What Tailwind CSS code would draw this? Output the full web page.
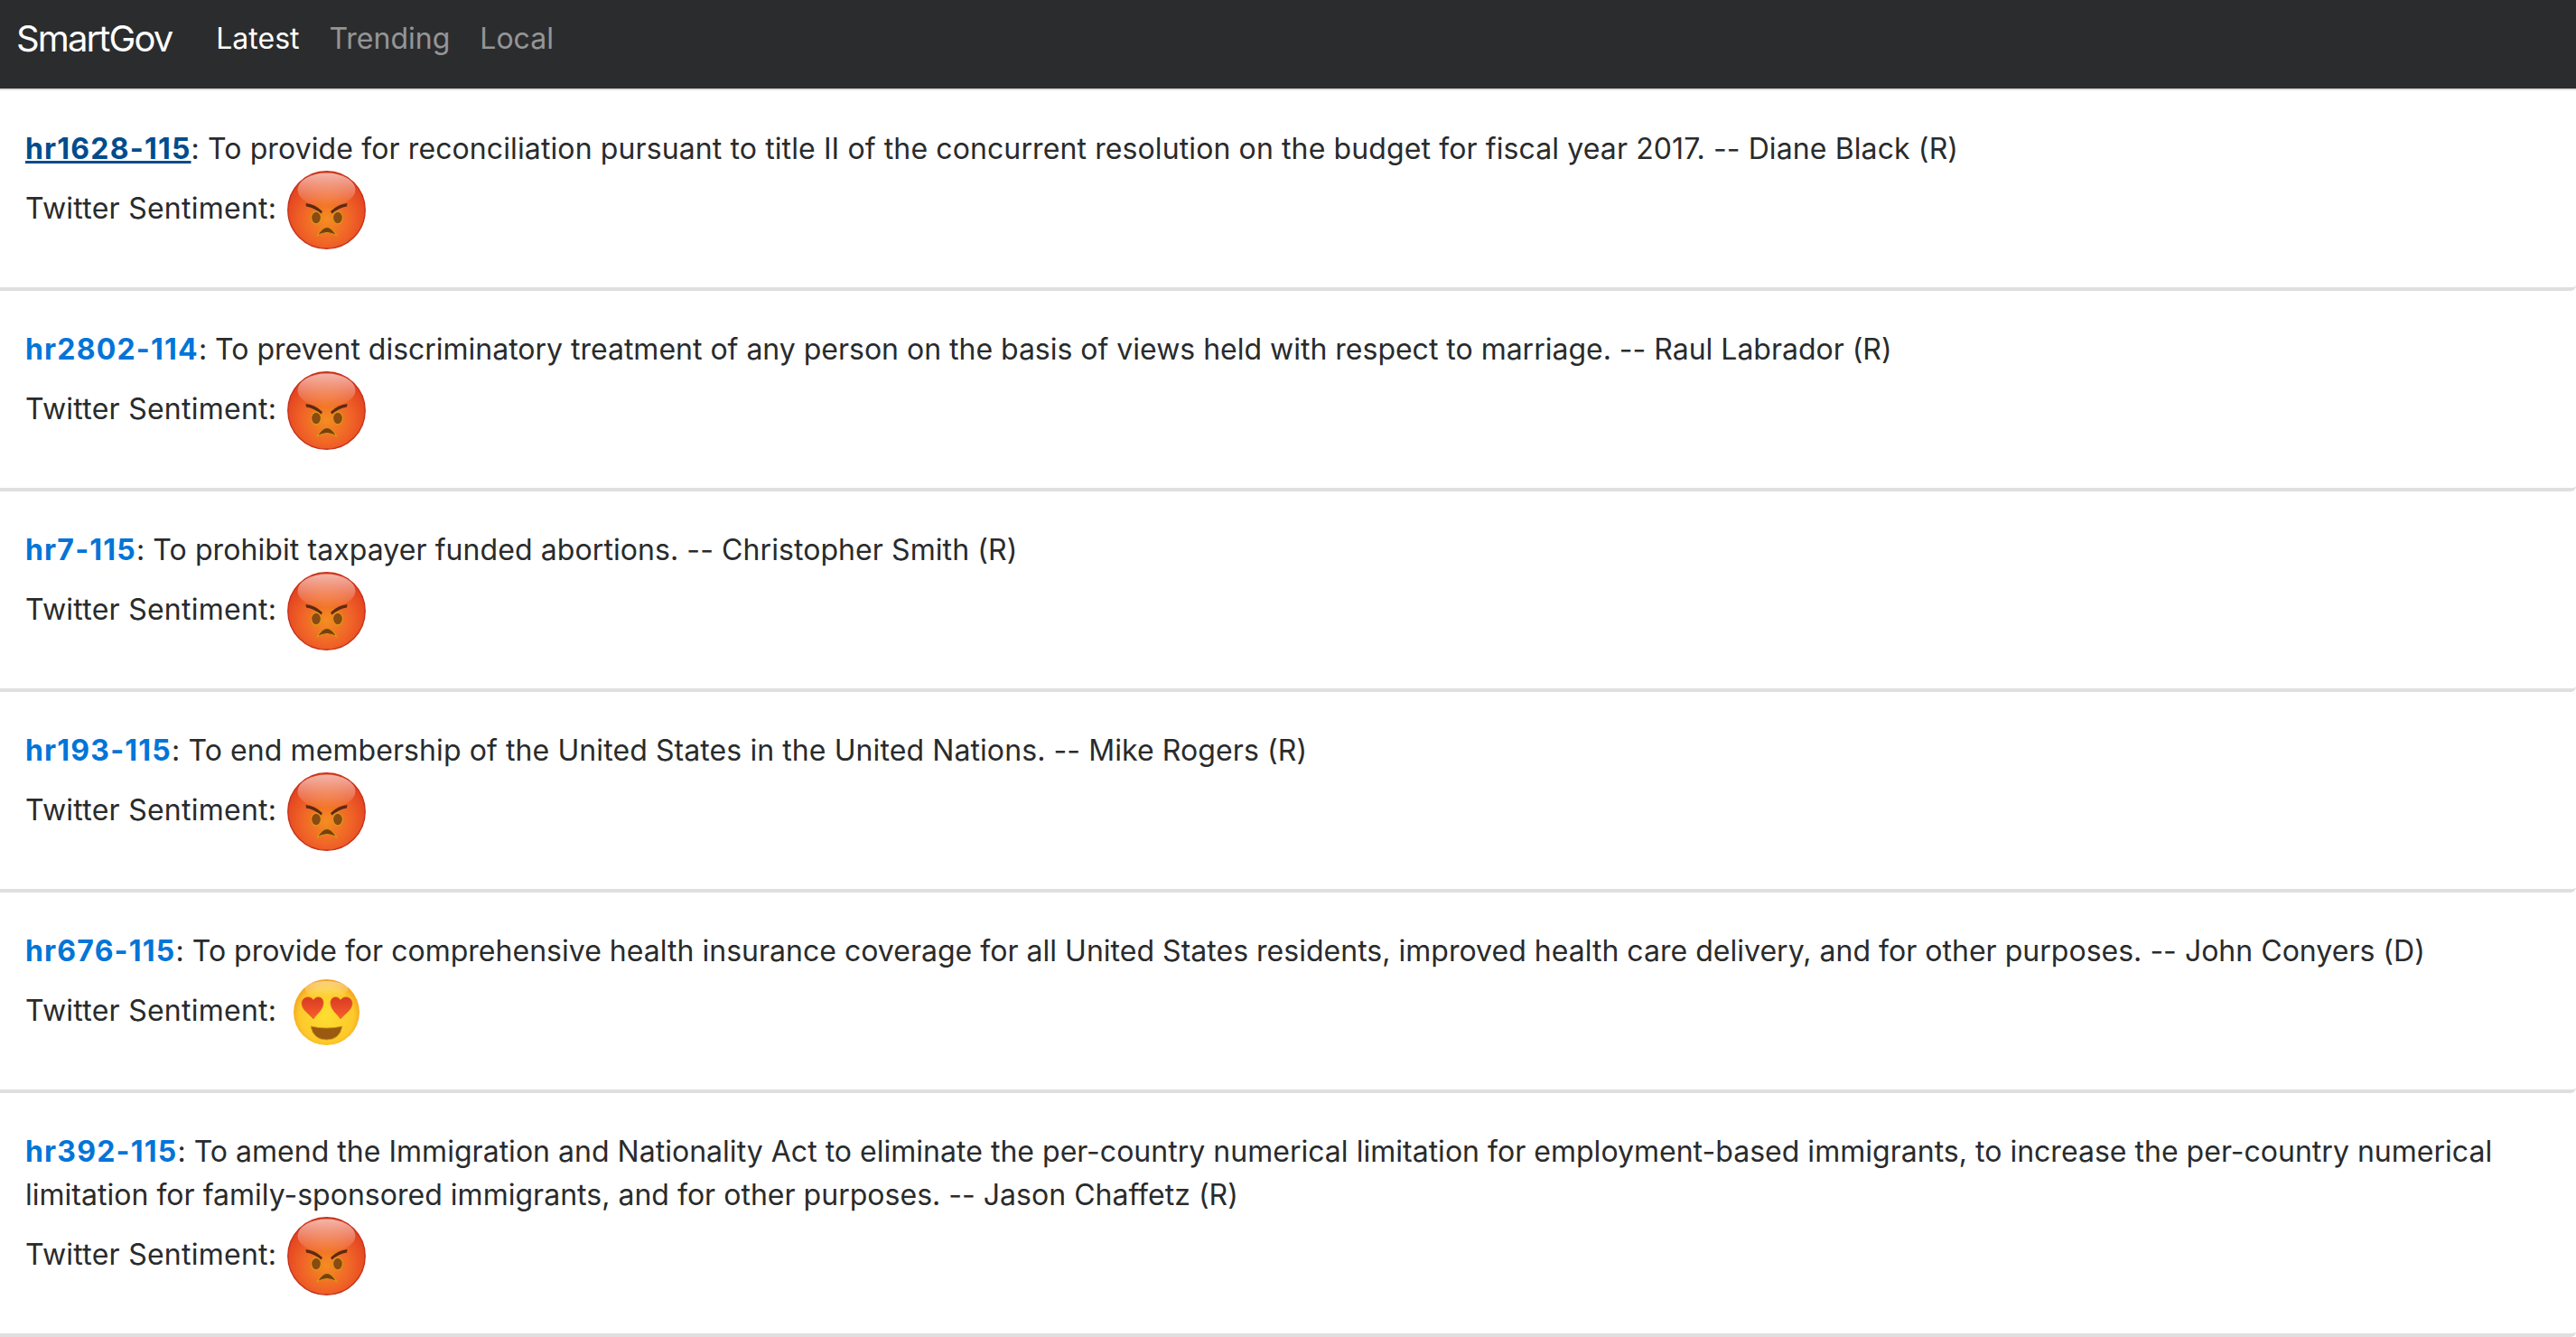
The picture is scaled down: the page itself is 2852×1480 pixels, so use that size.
<!DOCTYPE html>
<html lang="en">
<head>
  <meta charset="UTF-8" />
  <title>SmartGov</title>
  <script src="https://cdn.jsdelivr.net/npm/@tailwindcss/browser@4"></script>
</head>
<body class="bg-white text-[#292b2c] font-['Inter',sans-serif] text-[32px] leading-[48px] overflow-hidden">

<!-- shared emoji artwork -->
<svg width="0" height="0" class="absolute">
  <defs>
    <radialGradient id="angryFill" cx="50%" cy="62%" r="58%">
      <stop offset="0" stop-color="#f58d22" />
      <stop offset="0.55" stop-color="#f06427" />
      <stop offset="1" stop-color="#e2401f" />
    </radialGradient>
    <linearGradient id="angryShine" x1="0" y1="0" x2="0" y2="1">
      <stop offset="0" stop-color="#ffffff" stop-opacity="0.62" />
      <stop offset="1" stop-color="#ffffff" stop-opacity="0" />
    </linearGradient>
    <radialGradient id="loveFill" cx="50%" cy="55%" r="55%">
      <stop offset="0" stop-color="#ffdf30" />
      <stop offset="0.75" stop-color="#fdc92b" />
      <stop offset="1" stop-color="#f29f1c" />
    </radialGradient>
    <linearGradient id="heartFill" x1="0" y1="0" x2="0" y2="1">
      <stop offset="0" stop-color="#d93a24" />
      <stop offset="1" stop-color="#f9602a" />
    </linearGradient>
    <linearGradient id="loveShine" x1="0" y1="0" x2="0" y2="1">
      <stop offset="0" stop-color="#ffffff" stop-opacity="0.45" />
      <stop offset="1" stop-color="#ffffff" stop-opacity="0" />
    </linearGradient>
    <symbol id="angry" viewBox="0 0 87 87">
      <circle cx="43.5" cy="43.5" r="42.7" fill="url(#angryFill)" stroke="#c5321b" stroke-width="1.4" />
      <ellipse cx="43.5" cy="21" rx="32" ry="18.5" fill="url(#angryShine)" />
      <path d="M20.5 36 Q31 37 39 45 L37.5 47.5 Q30 41 21 39.5 Z" fill="#5b2a14" />
      <path d="M66.5 36 Q56 37 48 45 L49.5 47.5 Q57 41 66 39.5 Z" fill="#5b2a14" />
      <ellipse cx="32" cy="52" rx="5.4" ry="6.8" fill="#8a4a12" stroke="#d99a12" stroke-width="1.2" />
      <ellipse cx="56" cy="52" rx="5.4" ry="6.8" fill="#8a4a12" stroke="#d99a12" stroke-width="1.2" />
      <path d="M33 72 Q44 53 55 72 Q44 65 33 72 Z" fill="#7a3f10" stroke="#d99a12" stroke-width="1.2" stroke-linejoin="round" />
    </symbol>
    <symbol id="love" viewBox="0 0 87 87">
      <circle cx="43.5" cy="43.5" r="36.5" fill="url(#loveFill)" />
      <ellipse cx="43.5" cy="18" rx="24" ry="9" fill="url(#loveShine)" />
      <path d="M29 51 C24 45 16 41 16 33.5 C16 27 25 24 29 30 C33 24 41 27 40 34 C39.5 41 33 45 29 51 Z" fill="url(#heartFill)" stroke="#e0641f" stroke-width="0.6" />
      <path d="M59 51 C55 45 48.5 41 48 34 C47 27 55 24 59 30 C63 24 72 27 72 33.5 C72 41 64 45 59 51 Z" fill="url(#heartFill)" stroke="#e0641f" stroke-width="0.6" />
      <path d="M26 59 Q43.5 63 61 59 Q58 74 43.5 74 Q29 74 26 59 Z" fill="#9a5a10" stroke="#d9a017" stroke-width="0.8" />
    </symbol>
  </defs>
</svg>

<nav class="h-[100px] bg-[#2b2c2e] border-b-2 border-[#dfdfdf] flex items-center pl-[18px] pb-[13px]">
  <a class="text-[40px] tracking-[-1.9px] text-white mr-[49px] leading-[60px]">SmartGov</a>
  <div class="flex gap-[33px]">
    <a class="text-white">Latest</a>
    <a class="text-white/50">Trending</a>
    <a class="text-white/50">Local</a>
  </div>
</nav>

<main>
  <div class="pt-[41px] pb-[42px] px-[28px] border-b-4 border-[#dfdfdf] rounded-r-[6px]">
    <p class="tracking-[0.11px]"><a class="font-bold text-[#014c8c] underline tracking-[1.2px]">hr1628-115</a>: To provide for reconciliation pursuant to title II of the concurrent resolution on the budget for fiscal year 2017. -- Diane Black (R)</p>
    <div class="flex items-center gap-[12px]">
      <span class="-mt-[4px] tracking-[0.25px]">Twitter Sentiment:</span>
      <svg class="w-[87px] h-[87px]"><use href="#angry" /></svg>
    </div>
  </div>
  <div class="pt-[41px] pb-[42px] px-[28px] border-b-4 border-[#dfdfdf] rounded-r-[6px]">
    <p class="tracking-[-0.01px]"><a class="font-bold text-[#0275d8] tracking-[1.2px]">hr2802-114</a>: To prevent discriminatory treatment of any person on the basis of views held with respect to marriage. -- Raul Labrador (R)</p>
    <div class="flex items-center gap-[12px]">
      <span class="-mt-[4px] tracking-[0.25px]">Twitter Sentiment:</span>
      <svg class="w-[87px] h-[87px]"><use href="#angry" /></svg>
    </div>
  </div>
  <div class="pt-[41px] pb-[42px] px-[28px] border-b-4 border-[#dfdfdf] rounded-r-[6px]">
    <p class="tracking-[0.08px]"><a class="font-bold text-[#0275d8] tracking-[1.2px]">hr7-115</a>: To prohibit taxpayer funded abortions. -- Christopher Smith (R)</p>
    <div class="flex items-center gap-[12px]">
      <span class="-mt-[4px] tracking-[0.25px]">Twitter Sentiment:</span>
      <svg class="w-[87px] h-[87px]"><use href="#angry" /></svg>
    </div>
  </div>
  <div class="pt-[41px] pb-[42px] px-[28px] border-b-4 border-[#dfdfdf] rounded-r-[6px]">
    <p class="tracking-[0.09px]"><a class="font-bold text-[#0275d8] tracking-[1.2px]">hr193-115</a>: To end membership of the United States in the United Nations. -- Mike Rogers (R)</p>
    <div class="flex items-center gap-[12px]">
      <span class="-mt-[4px] tracking-[0.25px]">Twitter Sentiment:</span>
      <svg class="w-[87px] h-[87px]"><use href="#angry" /></svg>
    </div>
  </div>
  <div class="pt-[41px] pb-[42px] px-[28px] border-b-4 border-[#dfdfdf] rounded-r-[6px]">
    <p class="tracking-[0.02px]"><a class="font-bold text-[#0275d8] tracking-[1.2px]">hr676-115</a>: To provide for comprehensive health insurance coverage for all United States residents, improved health care delivery, and for other purposes. -- John Conyers (D)</p>
    <div class="flex items-center gap-[12px]">
      <span class="-mt-[4px] tracking-[0.25px]">Twitter Sentiment:</span>
      <svg class="w-[87px] h-[87px]"><use href="#love" /></svg>
    </div>
  </div>
  <div class="pt-[41px] pb-[42px] px-[28px] border-b-4 border-[#dfdfdf] rounded-r-[6px]">
    <p class="tracking-[0.02px]"><a class="font-bold text-[#0275d8] tracking-[1.2px]">hr392-115</a>: To amend the Immigration and Nationality Act to eliminate the per-country numerical limitation for employment-based immigrants, to increase the per-country numerical limitation for family-sponsored immigrants, and for other purposes. -- Jason Chaffetz (R)</p>
    <div class="flex items-center gap-[12px]">
      <span class="-mt-[4px] tracking-[0.25px]">Twitter Sentiment:</span>
      <svg class="w-[87px] h-[87px]"><use href="#angry" /></svg>
    </div>
  </div>
</main>

</body>
</html>
